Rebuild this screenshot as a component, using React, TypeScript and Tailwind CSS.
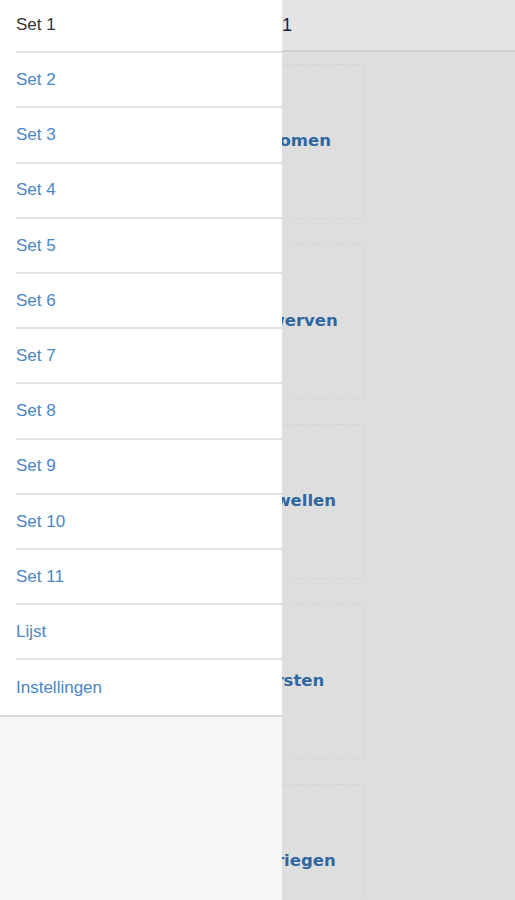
const items = ["Set 1", "Set 2", "Set 3", "Set 4", "Set 5", "Set 6", "Set 7", "Set 8", "Set 9", "Set 10", "Set 11", "Lijst", "Instellingen"];

const tiles = ["Bekomen", "Verwerven", "Opzwellen", "Bersten", "Bedriegen"];

function App() {
  return (
    <main className="relative h-[900px] w-[515px] overflow-hidden bg-[#dedede] font-['Liberation_Sans',sans-serif]">
      {/* page under the drawer */}
      <header className="flex h-[52px] items-center border-b-2 border-[#d0d0d0] bg-[#e3e3e3] pl-[250px] text-[18px] text-[#1b1b3a]">
        Set 1
      </header>
      <div className="flex flex-col gap-[25px] pl-[212px] pt-[12px]">
        {tiles.map((t) => (
          <div
            key={t}
            className="flex h-[155px] w-[152px] items-center justify-center border border-dashed border-[#c9d8d8] font-['DejaVu_Sans',sans-serif] text-[16.5px] font-bold text-[#2f67a3]"
          >
            {t}
          </div>
        ))}
      </div>

      {/* drawer */}
      <nav className="absolute left-0 top-0 flex h-full w-[282px] flex-col overflow-hidden bg-[#f6f6f6]">
        <ul className="-mt-[2px] border-b-2 border-[#dadada] bg-white">
          {items.map((item, i) => (
            <li
              key={item}
              className={
                "h-[55.2px] pl-4 text-[17px] " +
                (i === 0 ? "text-[#333333]" : "text-[#4a86c4]")
              }
            >
              <span
                className={
                  "flex h-full w-full items-center " +
                  (i < items.length - 1 ? "border-b-2 border-[#e2e2e2]" : "")
                }
              >
                {item}
              </span>
            </li>
          ))}
        </ul>
      </nav>
    </main>
  );
}

export default App;
